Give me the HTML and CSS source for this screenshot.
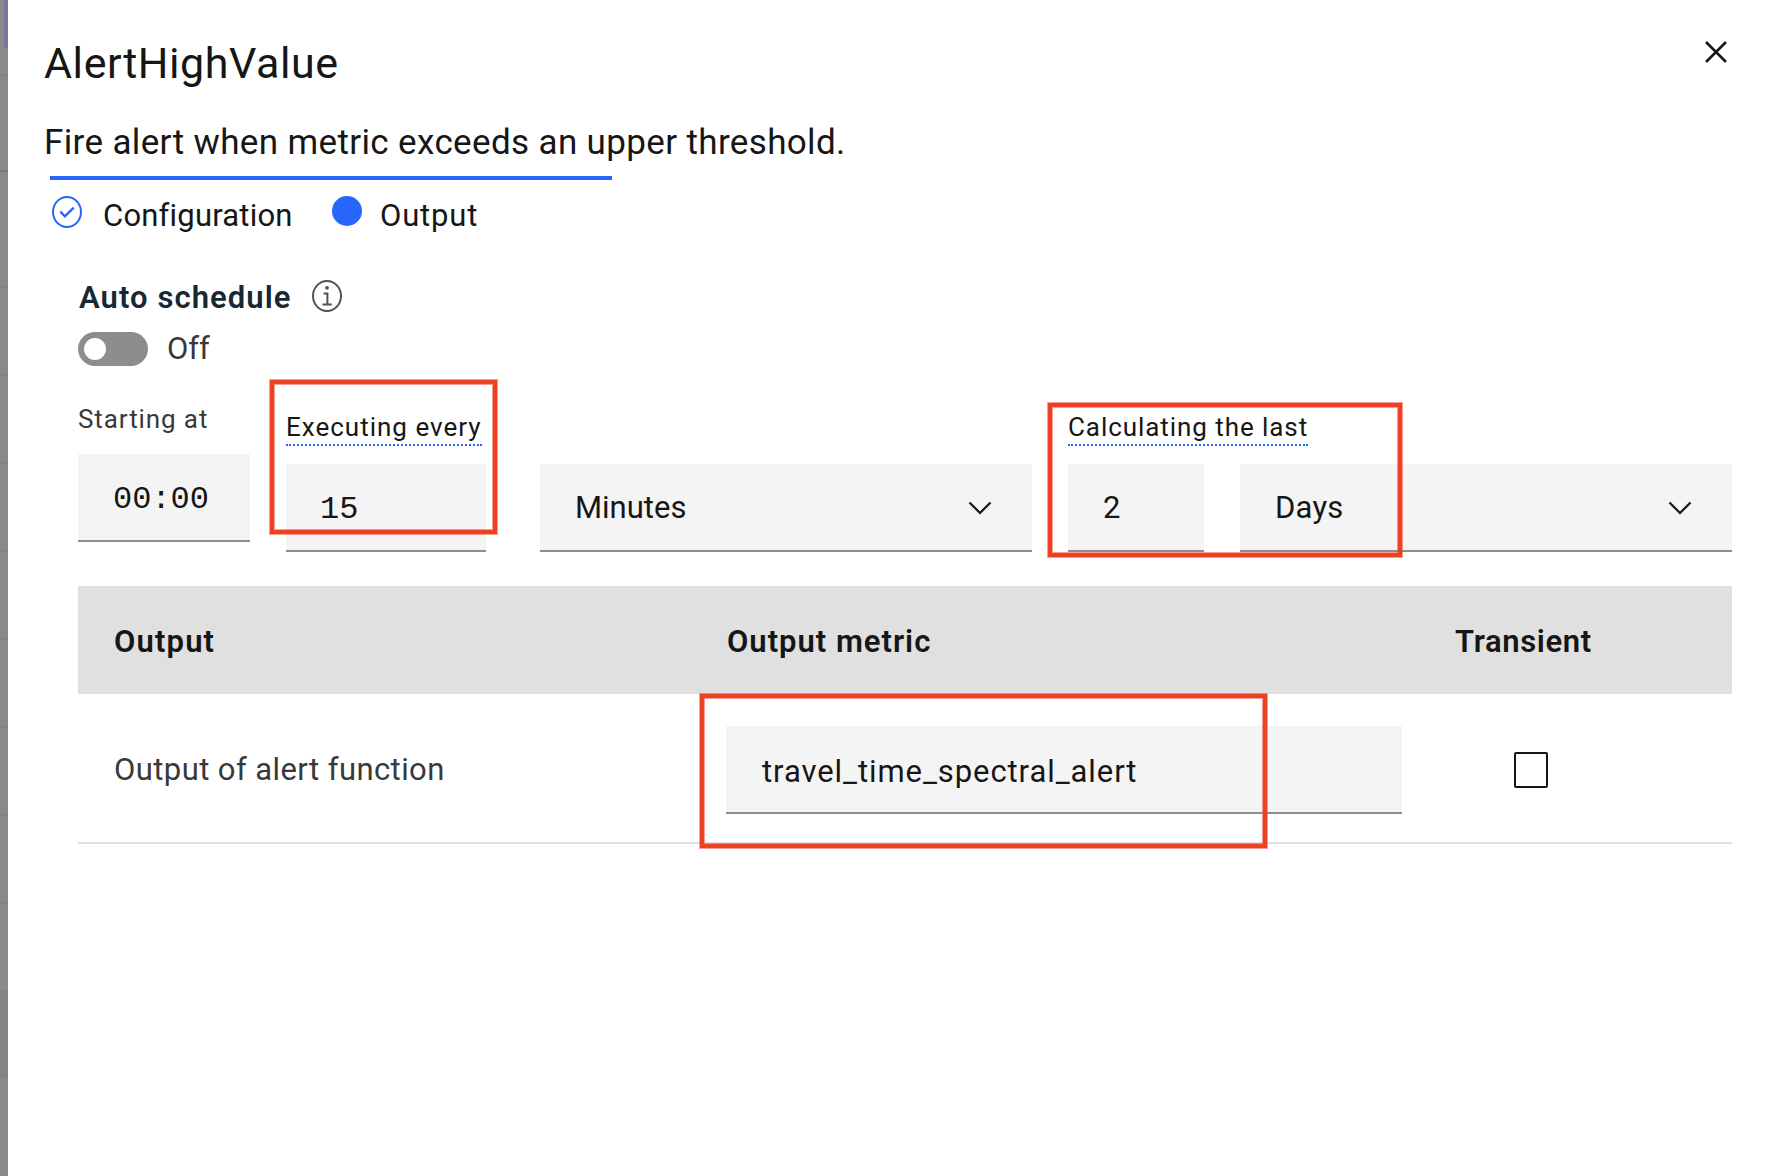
FILE: index.html
```html
<!DOCTYPE html>
<html lang="en">
<head>
<meta charset="utf-8">
<title>AlertHighValue</title>
<link rel="stylesheet" href="styles.css">
</head>
<body>
<div class="page">
  <div class="backdrop">
    <i class="accent"></i>
    <i class="rule rule-head"></i>
    <i class="rule rule-dark"></i>
    <div class="rows"></div>
    <i class="shade"></i>
  </div>
  <main class="panel">
    <header class="head">
      <h1 class="title"><span>AlertHighValue</span></h1>
      <button class="close" aria-label="Close"><svg width="24" height="24" viewBox="0 0 24 24"><path d="M2 2L22 22M22 2L2 22" fill="none" stroke="#161616" stroke-width="2.5"/></svg></button>
    </header>
    <p class="subtitle"><span>Fire alert when metric exceeds an upper threshold.</span></p>
    <div class="progress"></div>
    <div class="steps">
      <svg class="step-icon" width="30" height="32" viewBox="0 0 30 32"><ellipse cx="15" cy="16" rx="14" ry="15" fill="none" stroke="#2866fb" stroke-width="2"/><path d="M8.3 15.6L13 20.4L21.7 11.6" fill="none" stroke="#2866fb" stroke-width="2.3"/></svg>
      <span class="step s1">Configuration</span>
      <i class="dot"></i>
      <span class="step s2">Output</span>
    </div>
    <section class="form">
      <div class="auto">
        <h2 class="auto-title">Auto schedule</h2>
        <svg class="info" width="30" height="32" viewBox="0 0 30 32"><ellipse cx="15" cy="16" rx="14" ry="15" fill="none" stroke="#525252" stroke-width="2"/><circle cx="15" cy="7.8" r="1.9" fill="#525252"/><path d="M11.5 13.5H15.4V24.5M10.5 24.5H19.8" fill="none" stroke="#525252" stroke-width="2"/></svg>
      </div>
      <div class="toggle-row"><span class="toggle"><i></i></span><span class="off">Off</span></div>
      <div class="fields">
        <div class="field f-time">
          <label class="label muted l1">Starting at</label>
          <div class="box mono">00:00</div>
        </div>
        <div class="field f-every">
          <label class="label hint l2">Executing every</label>
          <div class="box mono num">15</div>
        </div>
        <div class="box select sel-min"><span class="t-min">Minutes</span><svg width="24" height="14" viewBox="0 0 24 14"><path d="M1.5 1.5L12 12L22.5 1.5" fill="none" stroke="#161616" stroke-width="2.2"/></svg></div>
        <div class="field f-last">
          <label class="label hint l3">Calculating the last</label>
          <div class="box">2</div>
        </div>
        <div class="box select sel-days"><span class="t-days">Days</span><svg width="24" height="14" viewBox="0 0 24 14"><path d="M1.5 1.5L12 12L22.5 1.5" fill="none" stroke="#161616" stroke-width="2.2"/></svg></div>
      </div>
      <div class="table">
        <div class="tr th">
          <span class="c1"><b class="h1">Output</b></span><span><b class="h2">Output metric</b></span><span><b class="h3">Transient</b></span>
        </div>
        <div class="tr td">
          <span class="c1 muted fn">Output of alert function</span>
          <div class="box metric"><span class="t-metric">travel_time_spectral_alert</span></div>
          <i class="check"></i>
        </div>
      </div>
    </section>
  </main>
  <i class="mark mark-every"></i>
  <i class="mark mark-last"></i>
  <i class="mark mark-metric"></i>
</div>
</body>
</html>
```
FILE: styles.css
```css
* { box-sizing: border-box; }
body { margin: 0; background: #fff; color: #161616; font-family: Roboto, "Liberation Sans", sans-serif; font-size: 31px; }
.page { position: relative; display: flex; width: 1766px; height: 1176px; overflow: hidden; }
.backdrop { position: relative; flex: none; width: 8px; background: #8a8a8a; }
.rows { margin-top: 286px; height: 704px; background: repeating-linear-gradient(#838383 0 2px, #8a8a8a 2px 88px); }
.accent { position: absolute; left: 4px; top: 0; width: 4px; height: 48px; background: #74799a; }
.rule { position: absolute; left: 0; width: 8px; height: 2px; background: #838383; }
.rule-head { top: 74px; }
.rule-dark { top: 170px; background: #787878; }
.shade { position: absolute; left: 0; top: 990px; width: 8px; height: 88px; background: #848484; }
.panel { flex: 1; padding: 37px 34px 0 36px; }
.head { display: flex; justify-content: space-between; height: 52px; }
.title { margin: 0; font-size: 43px; font-weight: 400; line-height: 52px; letter-spacing: 0.56px; }
.close { margin: 3px 4px 0 0; padding: 0; width: 24px; height: 24px; border: 0; background: none; }
.close svg { display: block; }
.subtitle { margin: 32px 0 11px; font-size: 35px; line-height: 44px; letter-spacing: 0.36px; white-space: nowrap; }
.progress { width: 562px; height: 4px; margin-left: 6px; background: #2866fb; }
.steps { display: flex; align-items: flex-start; margin: 16px 0 0 8px; height: 40px; }
.step { line-height: 36px; margin-top: 2px; white-space: nowrap; }
.s1 { width: 228px; margin-left: 21px; letter-spacing: 0.2px; }
.dot { width: 30px; height: 30px; margin-left: 1px; border-radius: 50%; background: #2866fb; }
.s2 { margin-left: 18px; letter-spacing: 0.85px; }
.form { margin: 44px 0 0 34px; }
.auto { display: flex; height: 36px; }
.auto-title { width: 233px; margin: 0 0 0 1px; font-size: 31px; font-weight: 600; line-height: 36px; letter-spacing: 1.07px; color: #152935; white-space: nowrap; }
.toggle-row { display: flex; margin-top: 16px; height: 34px; }
.toggle { width: 70px; height: 34px; padding: 6px; border-radius: 17px; background: #8d8d8d; }
.toggle i { display: block; width: 22px; height: 22px; border-radius: 50%; background: #fff; }
.off { margin-left: 19px; line-height: 33px; color: #393939; }
.fields { display: flex; align-items: flex-end; margin-top: 37px; height: 149px; }
.field { display: flex; flex-direction: column; align-items: flex-start; }
.label { font-size: 26px; line-height: 32px; white-space: nowrap; }
.l1 { letter-spacing: 0.9px; }
.l2 { letter-spacing: 1px; }
.l3 { letter-spacing: 0.93px; }
.muted { color: #393939; }
.hint { height: 35px; margin-bottom: 18px; border-bottom: 2px dotted #2866fb; }
.f-time { width: 172px; align-self: flex-start; }
.f-time .label { margin-bottom: 19px; }
.f-every { width: 200px; margin-left: 36px; }
.f-last { width: 136px; margin-left: 36px; }
.box { display: flex; align-items: center; width: 100%; height: 88px; padding-left: 35px; border-bottom: 2px solid #8d8d8d; background: #f4f4f4; }
.mono { padding-top: 5px; font-family: "Liberation Mono", monospace; font-size: 32px; }
.num { padding-left: 34px; }
.select { justify-content: space-between; padding-right: 40px; }
.select svg { margin-top: 2px; }
.sel-min { width: 492px; margin-left: 54px; }
.sel-days { width: 492px; margin-left: 36px; }
.t-days { letter-spacing: 0.2px; }
.table { margin-top: 34px; }
.tr { display: grid; grid-template-columns: 648px 728px 1fr; align-items: center; }
.c1 { padding-left: 36px; }
.th { height: 108px; border-top: 2px solid #dde1e6; background: #e0e0e0; }
.th b { font-weight: 600; }
.h1 { letter-spacing: 1.15px; }
.h2 { margin-left: 1px; letter-spacing: 1px; }
.h3 { margin-left: 1px; letter-spacing: 0.65px; }
.td { height: 150px; border-bottom: 2px solid #e0e0e0; }
.fn { padding-top: 3px; letter-spacing: 0.42px; }
.metric { width: 676px; margin-top: 4px; padding: 4px 0 0 36px; }
.t-metric { letter-spacing: 0.92px; }
.check { width: 34px; height: 36px; margin: 4px 0 0 60px; border: 2px solid #161616; border-radius: 2px; }
.mark { position: absolute; border: 4px solid #ee4023; box-shadow: 0 0 0 1px rgba(238,64,35,.5), inset 0 0 0 1px rgba(238,64,35,.5); }
.mark-every { left: 270px; top: 380px; width: 227px; height: 154px; }
.mark-last { left: 1048px; top: 403px; width: 354px; height: 154px; }
.mark-metric { left: 700px; top: 694px; width: 567px; height: 154px; }
```
